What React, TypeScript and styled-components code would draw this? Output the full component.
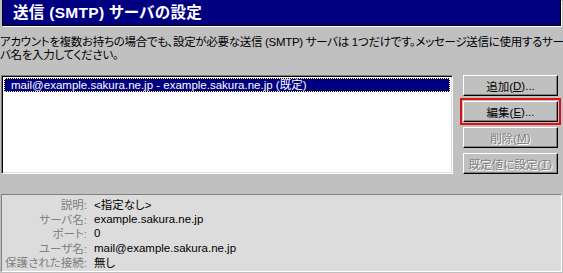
import { Fragment } from "react";
import styled, { createGlobalStyle } from "styled-components";

const Global = createGlobalStyle`
  html, body {
    margin: 0;
    padding: 0;
    background: #c0c0c0;
  }
`;

const Dialog = styled.div`
  width: 563px;
  height: 273px;
  background: #c0c0c0;
  font-family: "Liberation Sans", "Noto Sans CJK JP", sans-serif;
  font-feature-settings: "palt";
  font-size: 11.5px;
  color: #000;
  overflow: hidden;
  display: flex;
  flex-direction: column;
`;

const TitleBar = styled.div`
  margin: 0 2px 0 2px;
  height: 25px;
  background: #000080;
  border: 1px solid #000;
  border-top: none;
  box-shadow: 1px 1px 0 #fff;
  color: #fff;
  font-size: 15.5px;
  font-weight: bold;
  line-height: 25px;
  padding-left: 10px;
  letter-spacing: 0.3px;
  white-space: nowrap;
`;

const Description = styled.div`
  margin-top: 10px;
  line-height: 13px;
  white-space: nowrap;
  letter-spacing: -0.3px;
`;

const Body = styled.div`
  display: flex;
  margin-top: 13px;
  padding-left: 1px;
`;

const ListBox = styled.div`
  width: 452px;
  height: 99px;
  box-sizing: border-box;
  background: #fff;
  border-top: 1px solid #808080;
  border-left: 1px solid #808080;
  border-right: 1px solid #fff;
  border-bottom: 1px solid #fff;
  box-shadow: inset 1px 1px 0 #000, inset -1px -1px 0 #dfdfdf;
  padding: 2px;
`;

const ListItem = styled.div<{ $selected?: boolean }>`
  height: 14px;
  line-height: 14px;
  padding-left: 7px;
  background: ${(p) => (p.$selected ? "#000080" : "transparent")};
  color: ${(p) => (p.$selected ? "#fff" : "#000")};
  outline: ${(p) => (p.$selected ? "1px dotted #ffff80" : "none")};
  outline-offset: -1px;
  white-space: nowrap;
`;

const ButtonColumn = styled.div`
  display: flex;
  flex-direction: column;
  gap: 5px;
  margin-left: 10px;
`;

const Button = styled.div<{ $disabled?: boolean; $focused?: boolean }>`
  width: 95px;
  height: 21px;
  box-sizing: border-box;
  background: #c0c0c0;
  border-top: 1px solid #fff;
  border-left: 1px solid #fff;
  border-right: 1px solid #000;
  border-bottom: 1px solid #000;
  box-shadow: inset -1px -1px 0 #808080;
  display: flex;
  align-items: center;
  justify-content: center;
  color: ${(p) => (p.$disabled ? "#808080" : "#000")};
  text-shadow: ${(p) => (p.$disabled ? "1px 1px 0 #fff" : "none")};
  outline: ${(p) => (p.$focused ? "2px solid #e01010" : "none")};
  outline-offset: 1px;
  white-space: nowrap;
  u {
    text-decoration: underline;
  }
`;

const DetailPanel = styled.div`
  margin: 20px 1px 0 1px;
  height: 78px;
  box-sizing: border-box;
  background: #dcdcdc;
  border-top: 1px solid #808080;
  border-left: 1px solid #808080;
  border-right: 1px solid #fff;
  border-bottom: 1px solid #fff;
  display: grid;
  grid-template-columns: 85px 1fr;
  grid-auto-rows: 14.5px;
  column-gap: 7px;
  padding-top: 2px;
  align-items: center;
`;

const Label = styled.div`
  text-align: right;
  color: #808080;
  white-space: nowrap;
`;

const Value = styled.div`
  white-space: nowrap;
`;

const details: [string, string][] = [
  ["説明:", "<指定なし>"],
  ["サーバ名:", "example.sakura.ne.jp"],
  ["ポート:", "0"],
  ["ユーザ名:", "mail@example.sakura.ne.jp"],
  ["保護された接続:", "無し"],
];

export default function App() {
  return (
    <Dialog>
      <Global />
      <TitleBar>送信 (SMTP) サーバの設定</TitleBar>
      <Description>
        アカウントを複数お持ちの場合でも、設定が必要な送信 (SMTP) サーバは 1つだけです。メッセージ送信に使用するサー
        <br />
        バ名を入力してください。
      </Description>
      <Body>
        <ListBox>
          <ListItem $selected>
            mail@example.sakura.ne.jp - example.sakura.ne.jp (既定)
          </ListItem>
        </ListBox>
        <ButtonColumn>
          <Button>
            追加(<u>D</u>)...
          </Button>
          <Button $focused>
            編集(<u>E</u>)...
          </Button>
          <Button $disabled>
            削除(<u>M</u>)
          </Button>
          <Button $disabled>
            既定値に設定(<u>T</u>)
          </Button>
        </ButtonColumn>
      </Body>
      <DetailPanel>
        {details.map(([label, value]) => (
          <Fragment key={label}>
            <Label>{label}</Label>
            <Value>{value}</Value>
          </Fragment>
        ))}
      </DetailPanel>
    </Dialog>
  );
}
